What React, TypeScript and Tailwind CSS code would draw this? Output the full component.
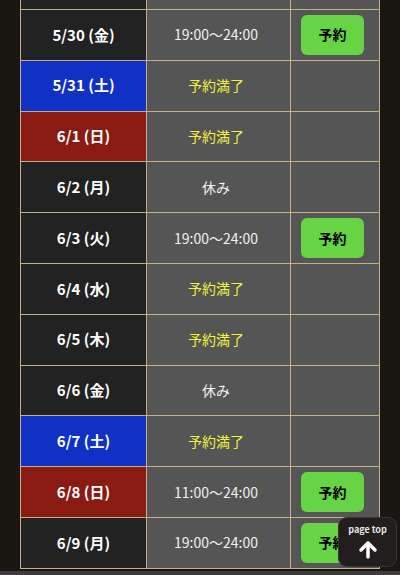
import { ArrowUp } from 'lucide-react'

type Day = {
  date: string
  wd: string
  kind: 'plain' | 'sat' | 'sun'
  slot: string
  open: boolean
}

const days: Day[] = [
  { date: '5/30', wd: '金', kind: 'plain', slot: '19:00〜24:00', open: true },
  { date: '5/31', wd: '土', kind: 'sat', slot: '予約満了', open: false },
  { date: '6/1', wd: '日', kind: 'sun', slot: '予約満了', open: false },
  { date: '6/2', wd: '月', kind: 'plain', slot: '休み', open: false },
  { date: '6/3', wd: '火', kind: 'plain', slot: '19:00〜24:00', open: true },
  { date: '6/4', wd: '水', kind: 'plain', slot: '予約満了', open: false },
  { date: '6/5', wd: '木', kind: 'plain', slot: '予約満了', open: false },
  { date: '6/6', wd: '金', kind: 'plain', slot: '休み', open: false },
  { date: '6/7', wd: '土', kind: 'sat', slot: '予約満了', open: false },
  { date: '6/8', wd: '日', kind: 'sun', slot: '11:00〜24:00', open: true },
  { date: '6/9', wd: '月', kind: 'plain', slot: '19:00〜24:00', open: true },
]

const dateBg = {
  plain: 'bg-[#222222]',
  sat: 'bg-[#1131c4]',
  sun: 'bg-[#8a1b12]',
}

function Row({ d }: { d: Day }) {
  const full = d.slot === '予約満了'
  return (
    <div className="grid h-[50.8px] grid-cols-[125px_144px_1fr] border-t border-[#c3b08b]">
      <div
        className={`${dateBg[d.kind]} flex items-center justify-center text-[15px] font-bold text-white`}
      >
        {d.date} ({d.wd})
      </div>
      <div
        className={`flex items-center justify-center border-l border-[#c3b08b] bg-[#555555] pr-[5px] text-[14px] ${
          full ? 'text-[#f2f03c]' : 'text-[#f0f0f0]'
        }`}
      >
        {d.slot}
      </div>
      <div className="flex items-center border-l border-[#c3b08b] bg-[#555555] pl-[10px]">
        {d.open && (
          <button className="flex h-[40px] w-[63px] items-center justify-center rounded-[6px] bg-[#66d444] text-[14px] font-bold text-black">
            予約
          </button>
        )}
      </div>
    </div>
  )
}

export default function App() {
  return (
    <div
      className="relative h-[575px] w-[400px] overflow-hidden bg-[#1a1611]"
      style={{ fontFamily: '"Noto Sans CJK JP", "Noto Sans", sans-serif' }}
    >
      <div className="mx-[20px] border-x border-b border-[#c3b08b]">
        <div className="grid h-[9px] grid-cols-[125px_144px_1fr]">
          <div className="bg-[#222222]" />
          <div className="border-l border-[#c3b08b] bg-[#555555]" />
          <div className="border-l border-[#c3b08b] bg-[#555555]" />
        </div>
        {days.map((d) => (
          <Row key={d.date} d={d} />
        ))}
      </div>
      <div className="mt-[2px] h-[6px] bg-[#3c3c3c]" />

      <button className="absolute right-[3px] bottom-[8px] flex h-[50px] w-[59px] flex-col items-center rounded-[9px] border border-[#3a3433] bg-[#231e1e] pt-[6px]">
        <span className="text-[9px] leading-[12px] font-semibold text-[#e6e6e6]">
          page top
        </span>
        <ArrowUp size={24} strokeWidth={3.5} className="mt-[2px] text-white" />
      </button>
    </div>
  )
}
